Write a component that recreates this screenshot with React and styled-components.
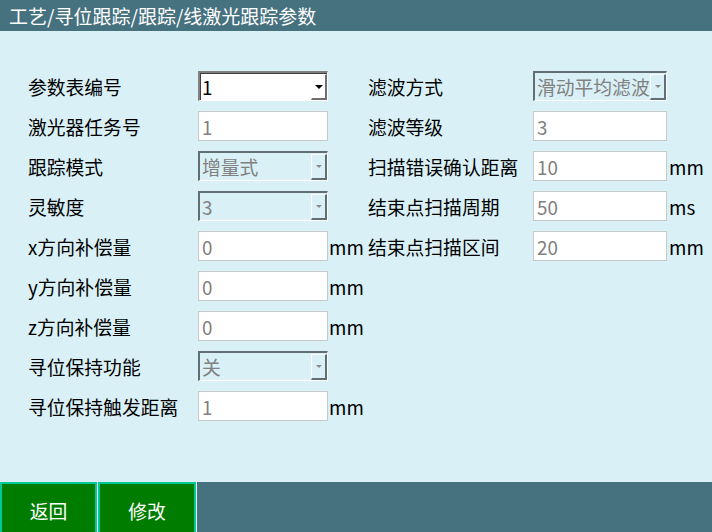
import React from "react";
import styled, { createGlobalStyle, css } from "styled-components";

const Global = createGlobalStyle`
  html, body { margin: 0; padding: 0; }
  body {
    width: 712px; height: 532px; overflow: hidden;
    background: #d9f0f6;
    font-family: "Noto Sans CJK SC", "Noto Sans", sans-serif;
  }
  #root { height: 532px; }
`;

const Screen = styled.div`
  width: 712px;
  height: 532px;
  display: flex;
  flex-direction: column;
  background: #d9f0f6;
`;

const TitleBar = styled.div`
  height: 31px;
  flex: none;
  background: #46717f;
  color: #ffffff;
  font-size: 19px;
  line-height: 31px;
  padding-left: 9px;
  white-space: nowrap;
`;

const Body = styled.div`
  flex: 1;
  display: flex;
  padding: 40px 0 0 28px;
`;

const Column = styled.div`
  display: grid;
  grid-template-columns: ${(p) => p.$label}px ${(p) => p.$control}px auto;
  grid-auto-rows: 30px;
  row-gap: 10px;
  align-content: start;
  width: ${(p) => p.$width}px;
`;

const Label = styled.div`
  font-size: 18.8px;
  color: #000;
  display: flex;
  align-items: center;
  white-space: nowrap;
`;

const Unit = styled.div`
  font-size: 18.8px;
  color: #000;
  display: flex;
  align-items: center;
  padding-left: ${(p) => p.$pad || 1}px;
  white-space: nowrap;
`;

const TextBox = styled.div`
  box-sizing: border-box;
  height: 30px;
  background: #ffffff;
  border: 1px solid #c6cacb;
  color: #808080;
  font-size: 18.8px;
  display: flex;
  align-items: center;
  padding-left: 3px;
  overflow: hidden;
  white-space: nowrap;
`;

const SelectBox = styled.div`
  box-sizing: border-box;
  height: 30px;
  display: flex;
  align-items: stretch;
  overflow: hidden;
  border-style: solid;
  border-width: 2px 1px 1px 2px;
  ${(p) =>
    p.$enabled
      ? css`
          background: #ffffff;
          border-color: #808080 #ffffff #ffffff #808080;
          box-shadow: inset 1px 1px 0 #404040;
          color: #000;
        `
      : css`
          background: #d9f0f6;
          border-color: #5f6f73 #ffffff #ffffff #5f6f73;
          color: #808080;
        `}
`;

const SelectText = styled.div`
  flex: 1;
  min-width: 0;
  font-size: 18.8px;
  display: flex;
  align-items: center;
  padding-left: 2px;
  white-space: nowrap;
  overflow: hidden;
`;

const ArrowBtn = styled.div`
  flex: none;
  width: 16px;
  margin: 1px 0 0 0;
  box-sizing: border-box;
  display: flex;
  align-items: center;
  justify-content: center;
  border-style: solid;
  border-width: 1px 2px 2px 1px;
  border-color: ${(p) =>
    p.$enabled ? "#ffffff #6e6e6e #6e6e6e #ffffff" : "#ffffff #5f6f73 #5f6f73 #ffffff"};
  background: ${(p) => (p.$enabled ? "#ffffff" : "#d9f0f6")};
`;

const Arrow = styled.div`
  width: 0;
  height: 0;
  border-left: ${(p) => (p.$enabled ? 4 : 3)}px solid transparent;
  border-right: ${(p) => (p.$enabled ? 4 : 3)}px solid transparent;
  border-top: ${(p) => (p.$enabled ? 4 : 3)}px solid ${(p) => (p.$enabled ? "#000" : "#8a8a8a")};
`;

const Footer = styled.div`
  height: 50px;
  flex: none;
  display: flex;
  gap: 1px;
  background: #e6f6fa;
`;

const Button = styled.div`
  width: ${(p) => p.$w}px;
  box-sizing: border-box;
  background: #007d00;
  border: 2px solid #00c997;
  border-bottom: none;
  color: #ffffff;
  font-size: 18.8px;
  display: flex;
  align-items: center;
  justify-content: center;
  padding-top: 4px;
`;

const FooterFill = styled.div`
  flex: 1;
  background: #46717f;
`;

function Select({ value, enabled }) {
  return (
    <SelectBox $enabled={enabled}>
      <SelectText>{value}</SelectText>
      <ArrowBtn $enabled={enabled}>
        <Arrow $enabled={enabled} />
      </ArrowBtn>
    </SelectBox>
  );
}

const leftRows = [
  { label: "参数表编号", type: "select", value: "1", enabled: true },
  { label: "激光器任务号", type: "text", value: "1" },
  { label: "跟踪模式", type: "select", value: "增量式" },
  { label: "灵敏度", type: "select", value: "3" },
  { label: "x方向补偿量", type: "text", value: "0", unit: "mm" },
  { label: "y方向补偿量", type: "text", value: "0", unit: "mm" },
  { label: "z方向补偿量", type: "text", value: "0", unit: "mm" },
  { label: "寻位保持功能", type: "select", value: "关" },
  { label: "寻位保持触发距离", type: "text", value: "1", unit: "mm" },
];

const rightRows = [
  { label: "滤波方式", type: "select", value: "滑动平均滤波" },
  { label: "滤波等级", type: "text", value: "3" },
  { label: "扫描错误确认距离", type: "text", value: "10", unit: "mm" },
  { label: "结束点扫描周期", type: "text", value: "50", unit: "ms" },
  { label: "结束点扫描区间", type: "text", value: "20", unit: "mm" },
];

function Rows({ rows, pad }) {
  return rows.map((r) => (
    <React.Fragment key={r.label}>
      <Label>{r.label}</Label>
      {r.type === "select" ? (
        <Select value={r.value} enabled={r.enabled} />
      ) : (
        <TextBox>{r.value}</TextBox>
      )}
      <Unit $pad={pad}>{r.unit || ""}</Unit>
    </React.Fragment>
  ));
}

export default function App() {
  return (
    <>
      <Global />
      <Screen>
        <TitleBar>工艺/寻位跟踪/跟踪/线激光跟踪参数</TitleBar>
        <Body>
          <Column $label={170} $control={130} $width={340}>
            <Rows rows={leftRows} pad={1} />
          </Column>
          <Column $label={165} $control={134} $width={344}>
            <Rows rows={rightRows} pad={2} />
          </Column>
        </Body>
        <Footer>
          <Button $w={97}>返回</Button>
          <Button $w={98}>修改</Button>
          <FooterFill />
        </Footer>
      </Screen>
    </>
  );
}
